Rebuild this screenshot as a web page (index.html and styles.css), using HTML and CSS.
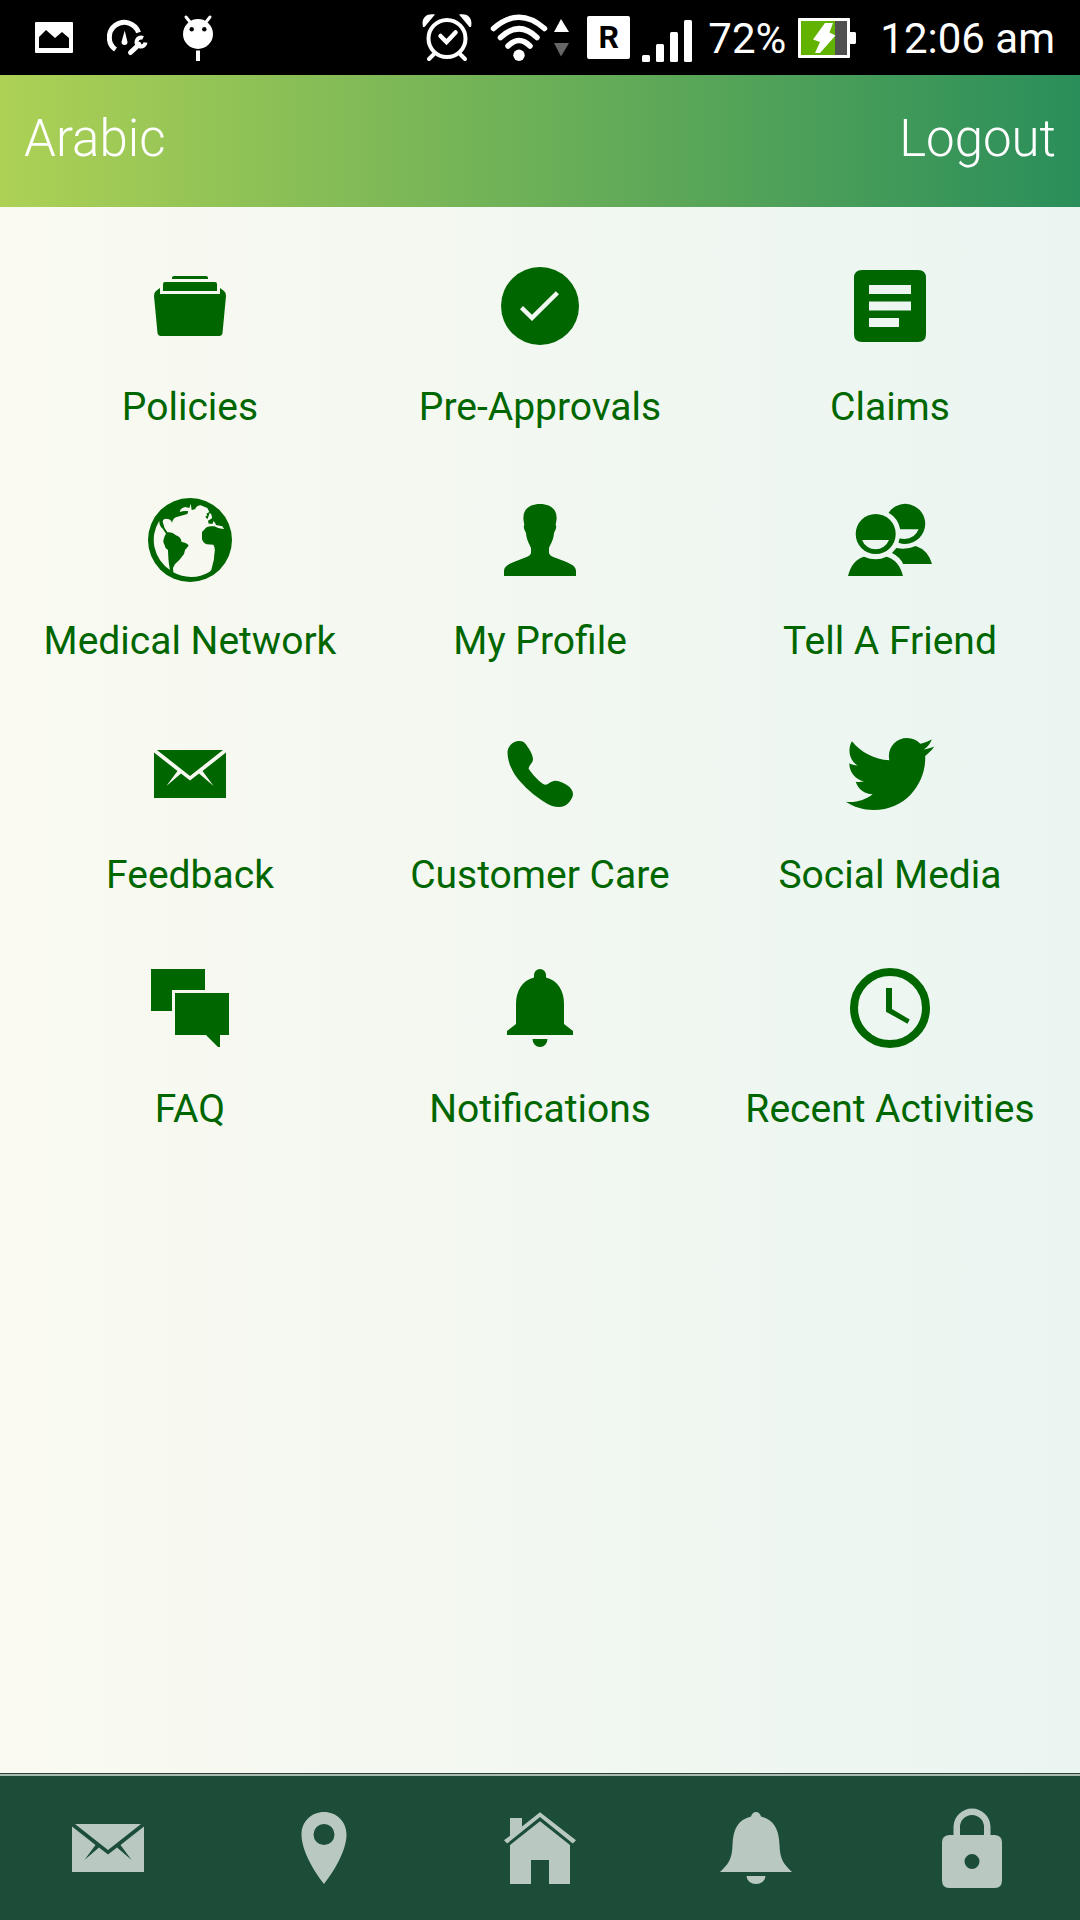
FILE: index.html
```
<!DOCTYPE html>
<html lang="en">
<head>
    <meta charset="UTF-8">
    <meta name="viewport" content="width=device-width, initial-scale=1.0">
    <title>Home</title>
    <link rel="stylesheet" href="styles.css">
</head>
<body>
    <!-- Status bar -->
    <div class="status-bar">
        <div class="status-left">
            <svg width="38" height="49" viewBox="0 0 38 49" fill="#fff">
                <path fill-rule="evenodd" d="M1 9H37Q38 9 38 10V39Q38 40 37 40H1Q0 40 0 39V10Q0 9 1 9ZM4 24V35H34V25L27 19 20 25 11 17Z"/>
            </svg>
            <svg width="41" height="49" viewBox="0 0 41 49" fill="none" stroke="#fff">
                <path d="M8.5 36.5A15 15 0 1 1 31.5 19.5" stroke-width="5"/>
                <path d="M17.7 17.5L20.5 29A3 3 0 0 1 14.5 29Z" fill="#fff" stroke="none"/>
                <path d="M23.5 39.5L32 31.5" stroke-width="5" stroke-linecap="round"/>
                <path d="M36 25A4.5 4.5 0 1 0 38.5 29.5" stroke-width="4"/>
            </svg>
            <svg width="31" height="49" viewBox="0 0 31 49" fill="#fff">
                <path d="M4 4L8 9M28 4L24 9" stroke="#fff" stroke-width="3" stroke-linecap="round"/>
                <circle cx="16" cy="21" r="15"/>
                <circle cx="9.7" cy="16.3" r="2.2" fill="#000"/>
                <circle cx="22.3" cy="16.3" r="2.2" fill="#000"/>
                <path d="M14 37.5H18V48H14Z"/>
            </svg>
        </div>
        <div class="status-right">
            <svg width="50" height="49" viewBox="0 0 50 49" fill="none" stroke="#fff" stroke-width="4" stroke-linecap="round">
                <circle cx="25" cy="25.5" r="18.5"/>
                <path d="M18.5 23L24.5 29 33.5 19.5" stroke-width="4.5"/>
                <path d="M11.5 41.5L7 46M38.5 41.5L43 46"/>
                <path d="M1 14C-1 5 4 0 13 1.5L2.5 14ZM49 14C51 5 46 0 37 1.5L47.5 14Z" fill="#fff" stroke="none"/>
            </svg>
            <svg width="79" height="49" viewBox="0 0 79 49" fill="none" stroke="#fff" stroke-width="5.5" stroke-linecap="round">
                <path d="M3.500 15.500Q29-7 54.500 15.500M10.500 24.500Q29 7 47 24.500M18 33Q29 22 40 33"/>
                <circle cx="29" cy="42.300" r="5.700" fill="#fff" stroke="none"/>
                <path d="M71 6L79 19H64Z" fill="#fff" stroke="none"/>
                <path d="M64 30H79L71 43.500Z" fill="#666" stroke="none"/>
            </svg>
            <div class="status-group">
                <span class="roaming">R</span>
                <svg class="signal" width="50" height="49" viewBox="0 0 50 49" fill="#fff">
                    <rect x="0" y="42" width="8" height="7" rx="1.500"/>
                    <rect x="14" y="31" width="8" height="18" rx="1.500"/>
                    <rect x="28" y="19" width="8" height="30" rx="1.500"/>
                    <rect x="42" y="7" width="8" height="42" rx="1.500"/>
                </svg>
                <span>72%</span>
                <svg width="58" height="49" viewBox="0 0 58 49" fill="#fff">
                    <path d="M1 5H51Q52 5 52 6V19H57L58 20V30L57 31H52V44Q52 45 51 45H1Q0 45 0 44V6Q0 5 1 5Z"/>
                    <path d="M3 8H37V42H3Z" fill="#62b200"/>
                    <path d="M37 8H49V42H37Z" fill="#505050"/>
                    <path d="M27 10H35L31.500 19.500 37.500 22.500 22 40H17L22 29 15 26.500Z"/>
                </svg>
            </div>
            <span class="clock">12:06 am</span>
        </div>
    </div>

    <header class="header">
        <button type="button" class="header-btn">Arabic</button>
        <button type="button" class="header-btn">Logout</button>
    </header>

    <main class="menu">
        <a href="#" class="menu-item">
            <svg class="icon" viewBox="0 0 96 96">
                <path d="M32 18H64Q66 18 66 20V21H30V20Q30 18 32 18ZM23 24H73Q75 24 75 26V33H21V26Q21 24 23 24Z"/>
                <path d="M18 30V36H78V30L82 33Q84 34.5 84 38L80.500 75Q80 78 77 78H19Q16 78 15.500 75L12 38Q12 34.500 14 33Z"/>
            </svg>
            <span>Policies</span>
        </a>
        <a href="#" class="menu-item">
            <svg class="icon" viewBox="0 0 96 96">
                <path fill-rule="evenodd" d="M48 9A39 39 0 1 1 48 87 39 39 0 0 1 48 9ZM28 51.300L40 63 67 36.300 63.800 33.200 40 56.700 31 48Z"/>
            </svg>
            <span>Pre-Approvals</span>
        </a>
        <a href="#" class="menu-item">
            <svg class="icon" viewBox="0 0 96 96">
                <path fill-rule="evenodd" d="M20 12H76Q84 12 84 20V76Q84 84 76 84H20Q12 84 12 76V20Q12 12 20 12ZM27 27V36H69V27ZM27 43.500V52.500H69V43.500ZM27 60V69H57V60Z"/>
            </svg>
            <span>Claims</span>
        </a>

        <a href="#" class="menu-item">
            <svg class="icon" viewBox="336 36 288 288">
                <path fill-rule="evenodd" d="M480 54A126 126 0 1 1 480 306 126 126 0 0 1 480 54Z
                    M388 122A108 108 0 0 0 420 270C417 255 415 240 414 210Q404 204 404 196 398 187 401 178 404 166 408 161L398 146Q387 138 388 122Z
                    M398 125Q400 114 412 117 424 118 426 129 428 115 440 111L472 102 475 94Q462 92 449 96 452 82 466 81L478 84 482 71 485 90 495 88Q500 76 512 76L532 84 538 96 529 101 532 106 526 110 532 118 536 108 539 98Q547 102 546 115L534 122 536 131 548 131 550 123Q556 128 558 135L577 139 582 147Q568 148 553 139 530 136 524 148L516 156V178Q520 190 530 193L550 194Q557 204 553 222 553 240 547 257 546 270 538 276A108 108 0 0 1 430 277L429 264Q434 250 448 240L462 222 465 210 476 197Q471 188 455 186 452 170 438 166 426 154 412 157 402 145 398 125Z"/>
            </svg>
            <span>Medical Network</span>
        </a>
        <a href="#" class="menu-item">
            <svg class="icon" viewBox="0 0 96 96">
                <path d="M48 12C58 12 64.500 17 64.500 25C65 28 63.700 31 63.700 33 65 35 63.500 38 62 41 61.500 48 59 51 57 56V61C58 64 60 64.500 64 66 77 71 84 73 84 79V84H12V79C12 73 19 71 32 66 36 64.500 38 64 39 61V56C37 51 34.500 48 34 41 32.500 38 31 35 32.300 33 32.300 31 31 28 31.500 25 31.500 17 38 12 48 12Z"/>
            </svg>
            <span>My Profile</span>
        </a>
        <a href="#" class="menu-item">
            <svg class="icon" viewBox="0 0 96 96">
                <path d="M46.600 20.700A20 20 0 1 1 56.500 50.700L57.500 46.500Q72 49 76.600 37.300H58.200A24 24 0 0 0 46.600 20.700Z"/>
                <path d="M54.400 56Q65 58 73.700 54 86 58 90 72H61.200Q58 65 50 61Z"/>
                <path fill-rule="evenodd" d="M33.700 22A20 20 0 1 1 33.700 62 20 20 0 0 1 33.700 22ZM20 48A14.500 14.500 0 0 0 47 48Z"/>
                <path d="M22 64.700Q34 70 44.400 64.700 57 68 61 84H6Q10 68 22 64.700Z"/>
            </svg>
            <span>Tell A Friend</span>
        </a>

        <a href="#" class="menu-item">
            <svg class="icon" viewBox="0 0 96 96">
                <path d="M15 24H81L48 50ZM12 26.500L35.500 45 24.400 60 39 47.500 48 54.500 57 47.500 71.600 60 60.500 45 84 26.500V72H12Z"/>
            </svg>
            <span>Feedback</span>
        </a>
        <a href="#" class="menu-item">
            <svg class="icon" viewBox="0 0 96 96">
                <path d="M26.600 15C32 14.500 34 18 36.600 22.300 39 26 41 30 41 33.300 41 37 37 39 36.600 42.500 39 47 49 58 53 58.700 56 59 59 54.500 63.400 54.700 68 55 72.500 57.300 75.900 59.700 79 62 81 65 81 68 81 71 79 73.500 77.600 75.700 75 79 71 81 66.900 81 62 81 58 79.500 54.400 77.300 48 73.500 42 69 36.600 64 29 57 22 49 18.700 40.700 16.500 36 15.500 30 15.500 25.700 16 20 21 15.500 26.600 15Z"/>
            </svg>
            <span>Customer Care</span>
        </a>
        <a href="#" class="menu-item">
            <svg class="icon" viewBox="0 0 512 512">
                <path d="M492 109.500c-17.400 7.700-36 12.900-55.600 15.300 20-12 35.400-31 42.600-53.600-18.700 11.100-39.400 19.200-61.500 23.500C399.800 75.800 374.600 64 346.800 64c-53.500 0-96.800 43.400-96.800 96.900 0 7.600.8 15 2.500 22.100-80.500-4-151.900-42.600-199.600-101.300-8.300 14.300-13.100 31-13.100 48.700 0 33.600 17.200 63.300 43.200 80.700-16-.4-31-4.800-44-12.100v1.200c0 47 33.400 86.100 77.700 95-8.100 2.200-16.700 3.400-25.500 3.400-6.200 0-12.300-.6-18.200-1.800 12.300 38.500 48.100 66.500 90.500 67.300-33.100 26-74.900 41.500-120.300 41.500-7.800 0-15.500-.5-23.100-1.400C62.800 432 113.800 448 168.400 448 346.600 448 444 300.300 444 172.200c0-4.200-.1-8.400-.3-12.500C462.600 146 479 129 492 109.500z"/>
            </svg>
            <span>Social Media</span>
        </a>

        <a href="#" class="menu-item">
            <svg class="icon" viewBox="0 0 96 96">
                <path d="M9 9H63V30H30V51H9Z"/>
                <path d="M33 33H87V75H78V87H76L64 75H33Z"/>
            </svg>
            <span>FAQ</span>
        </a>
        <a href="#" class="menu-item">
            <svg class="icon" viewBox="0 0 96 96">
                <path d="M42 17.500V15A6 6 0 0 1 54 15V17.500C66 20.500 72 31 72 44V64L81 71V75H15V71L24 64V44C24 31 30 20.500 42 17.500ZM40.500 79H55.500A7.500 8 0 0 1 40.500 79Z"/>
            </svg>
            <span>Notifications</span>
        </a>
        <a href="#" class="menu-item">
            <svg class="icon" viewBox="0 0 96 96">
                <circle cx="48" cy="48" r="36" fill="none" stroke="currentColor" stroke-width="8"/>
                <path d="M44 28H50V49L67.700 59.500 65.500 63.700 44 51.700Z"/>
            </svg>
            <span>Recent Activities</span>
        </a>
    </main>

    <nav class="tab-bar">
        <a href="#" aria-label="Messages">
            <svg class="icon" viewBox="0 0 96 96">
                <path d="M15 24H81L48 50ZM12 26.500L35.500 45 24.400 60 39 47.500 48 54.500 57 47.500 71.600 60 60.500 45 84 26.500V72H12Z"/>
            </svg>
        </a>
        <a href="#" aria-label="Locations">
            <svg class="icon" viewBox="0 0 96 96">
                <path fill-rule="evenodd" d="M48 12C35.400 12 25.500 21.500 25.500 34.500 25.500 50 37 70 48 84 59 70 70.500 50 70.500 34.500 70.500 21.500 60.600 12 48 12ZM48 24A10.500 10.500 0 1 1 48 45 10.500 10.500 0 0 1 48 24Z"/>
            </svg>
        </a>
        <a href="#" aria-label="Home">
            <svg class="icon" viewBox="0 0 96 96">
                <path d="M48 12.300L84 40.300 80.800 43.500 48 17 15.200 43.500 12 40.300 18 35.700V18H30V26.500Z"/>
                <path d="M48 21.300L78 45V84H57V60H39V84H18V45Z"/>
            </svg>
        </a>
        <a href="#" aria-label="Notifications">
            <svg class="icon" viewBox="0 0 96 96">
                <path d="M43 16.500C44 13.500 45.500 12 48 12S52 13.500 53 16.500C65 19.500 71 28 71.500 45 72 60 76 64 84 72H12C20 64 24 60 24.500 45 25 28 31 19.500 43 16.500ZM38.500 76H57.500A9.500 8 0 0 1 38.500 76Z"/>
            </svg>
        </a>
        <a href="#" aria-label="Lock">
            <svg class="icon" viewBox="0 0 96 96">
                <path fill-rule="evenodd" d="M25 35H29.500V27A18.500 18.500 0 0 1 66.500 27V35H71Q78 36 78 42V80Q78 88 71 88H25Q18 88 18 80V42Q18 36 25 35ZM36 35H60V27A12 12 0 0 0 36 27ZM48 54A7.500 7.500 0 1 0 48 69 7.500 7.500 0 0 0 48 54Z"/>
            </svg>
        </a>
    </nav>
</body>
</html>
```
FILE: styles.css
```
* {
    margin: 0;
    padding: 0;
    box-sizing: border-box;
}

body {
    font-family: Roboto, 'Open Sans', sans-serif;
    background: linear-gradient(to right, #fafaf1, #eaf5f1);
    min-height: 100vh;
    display: flex;
    flex-direction: column;
}

a {
    color: inherit;
    text-decoration: none;
}

svg {
    display: block;
    flex-shrink: 0;
}

/* Status bar */
.status-bar {
    display: flex;
    justify-content: space-between;
    background: #000;
    color: #fff;
    font-size: 42px;
    line-height: 52px;
    padding: 13px 25px 10px 35px;
}

.status-left {
    display: flex;
    gap: 34px;
}

.status-right {
    display: flex;
    gap: 18px;
}

.status-group {
    display: flex;
    gap: 12px;
}

.roaming {
    width: 43px;
    height: 43px;
    margin-top: 3px;
    background: #fff;
    color: #000;
    border-radius: 2px;
    font-size: 32px;
    font-weight: bold;
    line-height: 43px;
    text-align: center;
}

.signal {
    margin-right: 4px;
}

.clock {
    margin-left: 6px;
}

/* Header */
.header {
    display: flex;
    justify-content: space-between;
    background: linear-gradient(to right, #add155, #2a8e5a);
    padding: 34px 24px 38px;
}

.header-btn {
    background: none;
    border: none;
    color: #fff;
    font-family: inherit;
    font-size: 51px;
    font-weight: 300;
    line-height: 60px;
    cursor: pointer;
}

/* Menu grid */
.menu {
    flex: 1;
    display: grid;
    grid-template-columns: repeat(3, 1fr);
    align-content: start;
    padding: 24px 15px;
}

.menu-item {
    display: flex;
    flex-direction: column;
    align-items: center;
    gap: 28px;
    padding: 27px 0 33px;
    color: #060;
    font-size: 39px;
    line-height: 50px;
    white-space: nowrap;
}

.icon {
    width: 96px;
    height: 96px;
    fill: currentColor;
}

/* Bottom tabs */
.tab-bar {
    display: grid;
    grid-template-columns: repeat(5, 1fr);
    background: #1b4d38;
    border-top: 2px solid #a9bbb1;
    box-shadow: 0 -1px 0 #2b4438;
    color: #b9c9c1;
}

.tab-bar a {
    display: flex;
    justify-content: center;
    padding: 24px 0;
}
```
